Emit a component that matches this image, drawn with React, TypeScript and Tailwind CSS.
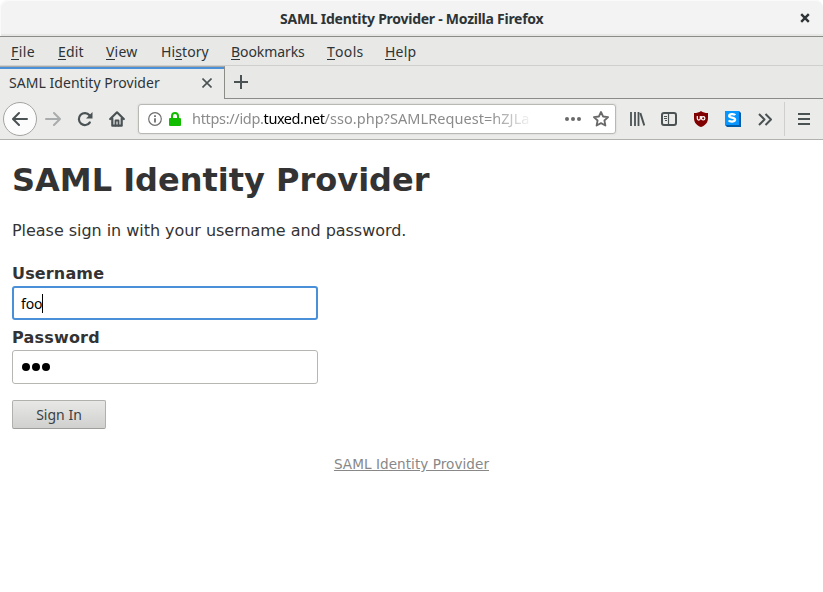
import React from 'react';

const ui = 'font-["Noto_Sans","Open_Sans",sans-serif]';

function MenuItem({ pre = '', letter, rest, box }: { pre?: string; letter: string; rest: string; box: string }) {
  return (
    <span className={`whitespace-nowrap ${box}`}>
      {pre}
      <span className="inline-block border-b border-[#2e3436] leading-[14px]">{letter}</span>
      {rest}
    </span>
  );
}

function TitleBar() {
  return (
    <header className="flex h-[37px] shrink-0 items-center rounded-t-lg border-b border-[#8b8c88] bg-[#f3f3f3] shadow-[inset_1px_1px_0_#fafafa,inset_0_-2px_1px_#e6e6e5]">
      <span className="w-[280px]" />
      <h1 className="w-[484px] whitespace-nowrap pt-px text-[14px] font-bold leading-5 tracking-[-0.26px] text-[#2e3436]">SAML Identity Provider - Mozilla Firefox</h1>
      <svg className="ml-[36px] h-[10px] w-[10px]" viewBox="0 0 10 10" stroke="#2e3436" strokeWidth="2.4">
        <path d="M1.200 1.200l7.600 7.600M8.800 1.200L1.200 8.800" />
      </svg>
    </header>
  );
}

function MenuBar() {
  return (
    <nav className="flex h-[29px] shrink-0 items-center border-b border-[#cfcfcd] bg-[#e8e8e7] pl-[11px] text-[14px] text-[#2e3436]">
      <MenuItem letter="F" rest="ile" box="w-[47px] tracking-[0.4px]" />
      <MenuItem letter="E" rest="dit" box="w-[48px] tracking-[0.2px]" />
      <MenuItem letter="V" rest="iew" box="w-[55px] tracking-[0.2px]" />
      <MenuItem pre="Hi" letter="s" rest="tory" box="w-[70px] tracking-[0.1px]" />
      <MenuItem letter="B" rest="ookmarks" box="w-[96px] tracking-[-0.08px]" />
      <MenuItem letter="T" rest="ools" box="w-[58px] tracking-[0.3px]" />
      <MenuItem letter="H" rest="elp" box="w-[50px] tracking-[0.2px]" />
    </nav>
  );
}

function TabStrip() {
  return (
    <div className="flex h-[33px] shrink-0">
      <div className="flex w-[225px] items-center border-r border-t border-r-[#8b8c88] border-t-[#a9a9a7] bg-[#ebebea] shadow-[inset_0_2px_0_#4a90d9]">
        <span className="w-[193px] whitespace-nowrap pb-[2px] pl-[9px] text-[14px] tracking-[0.04px] text-[#2e3436]">SAML Identity Provider</span>
        <svg className="ml-[9px] h-[10px] w-[10px]" viewBox="0 0 10 10" stroke="#4b5254" strokeWidth="1.6">
          <path d="M.5.5l9 9M9.500.5l-9 9" />
        </svg>
      </div>
      <div className="flex flex-1 items-center border-b border-[#8b8c88] bg-[#e8e8e7] pl-[9px]">
        <svg className="h-[14px] w-[14px]" viewBox="0 0 14 14" stroke="#4b5254" strokeWidth="2">
          <path d="M7 0v14M0 7h14" />
        </svg>
      </div>
    </div>
  );
}

function AddressBar() {
  return (
    <div className="flex h-[30px] w-[478px] shrink-0 items-center rounded-[3px] border border-[#b8b8b5] bg-white shadow-[0_0_1px_1px_#e2e2e0]">
      <svg className="ml-[9px] h-[14px] w-[14px] shrink-0" viewBox="0 0 14 14" fill="none" stroke="#6f6f6f" strokeWidth="1.2">
        <circle cx="7" cy="7" r="6.3" />
        <path d="M7 6.200v4.300M7 3.300v1.800" strokeWidth="1.8" />
      </svg>
      <svg className="ml-[7px] h-[14px] w-[12px] shrink-0" viewBox="0 0 12 14" fill="none">
        <rect y="6" width="12" height="8" rx="1" fill="#12bc00" />
        <path d="M3 7V4a3 3 0 016 0v3" stroke="#12bc00" strokeWidth="2" />
      </svg>
      <span className="ml-[11px] w-[352px] shrink-0 whitespace-nowrap text-[14.500px] text-[#8b8b8b] [mask-image:linear-gradient(to_right,black_298px,transparent_342px)]">
        <span className="tracking-[-0.32px]">https://idp.</span>
        <span className="tracking-[-0.45px] text-black">tuxed.net</span>
        <span className="tracking-[0.05px]">/sso.php?SAMLRequest=hZJLa</span>
      </span>
      <svg className="ml-[21px] h-[4px] w-[16px] shrink-0" viewBox="0 0 16 4" fill="#696969">
        <circle cx="2" cy="2" r="2" /><circle cx="8" cy="2" r="2" /><circle cx="14" cy="2" r="2" />
      </svg>
      <svg className="ml-[12px] h-[16px] w-[16px] shrink-0" viewBox="0 0 16 16" fill="none" stroke="#696969" strokeWidth="1.8" strokeLinejoin="round">
        <path d="M8 1l2.100 4.500 5 .6-3.700 3.400 1 5L8 12.100l-4.400 2.400 1-5L.9 6.100l5-.6z" />
      </svg>
    </div>
  );
}

function Toolbar() {
  return (
    <div className="flex h-[41px] shrink-0 items-center border-b border-[#b1b1ae] bg-[#ebebea] text-[#4b5254]">
      <button className="ml-[3px] flex h-[34px] w-[34px] items-center justify-center rounded-full border border-[#a4a4a2] bg-[#fcfcfc]">
        <svg className="h-[16px] w-[16px]" viewBox="0 0 16 16" fill="none" stroke="currentColor" strokeWidth="2" strokeLinecap="round" strokeLinejoin="round">
          <path d="M15 8H1.500M7 2L1 8l6 6" />
        </svg>
      </button>
      <svg className="ml-[8px] h-[16px] w-[16px] text-[#a9acac]" viewBox="0 0 16 16" fill="none" stroke="currentColor" strokeWidth="2" strokeLinecap="round" strokeLinejoin="round">
        <path d="M1 8h13.500M9 2l6 6-6 6" />
      </svg>
      <svg className="ml-[16px] h-[16px] w-[16px]" viewBox="0 0 16 16" fill="none" stroke="currentColor" strokeWidth="2.200">
        <path d="M12.800 11.500A6 6 0 1112.500 4.200" strokeLinecap="round" />
        <path d="M15.500 1v6.500H9z" fill="currentColor" stroke="none" />
      </svg>
      <svg className="ml-[16px] h-[16px] w-[16px]" viewBox="0 0 16 16" fill="none" stroke="currentColor" strokeWidth="2.200" strokeLinecap="round" strokeLinejoin="round">
        <path d="M1.200 8L8 1.300 14.800 8M3.300 7.500v7.200h9.400V7.500" />
        <path d="M6.500 14.500V9.500h3v5" strokeWidth="1.800" />
      </svg>
      <span className="w-[13px]" />
      <AddressBar />
      <svg className="ml-[14px] h-[14px] w-[15px]" viewBox="0 0 15 14" fill="none" stroke="currentColor" strokeWidth="2">
        <path d="M1 0v14M5 0v14M8.500 0v14" strokeWidth="1.800" /><path d="M10.300 1L14.300 13.500" />
      </svg>
      <svg className="ml-[16px] h-[14px] w-[16px]" viewBox="0 0 16 14" fill="none" stroke="currentColor" strokeWidth="2">
        <rect x="1" y="1" width="14" height="12" rx="2" />
        <path d="M7.500 1v12" strokeWidth="1.200" /><path d="M3 4.500h3M3 6.500h3M4 8.500h2" strokeWidth="1" />
      </svg>
      <svg className="ml-[17px] h-[16px] w-[14px]" viewBox="0 0 14 16">
        <path d="M7 0c2 1.500 4 2 7 2v5c0 5-3 7.500-7 9-4-1.500-7-4-7-9V2c3 0 5-.5 7-2z" fill="#800000" />
        <path d="M3.300 5v2.600a1.500 1.500 0 003 0V5" fill="none" stroke="#fff" strokeWidth="1.200" />
        <circle cx="9.200" cy="7.300" r="1.700" fill="none" stroke="#fff" strokeWidth="1.200" />
        <path d="M7.300 5v2.500" stroke="#fff" strokeWidth="1" />
      </svg>
      <svg className="ml-[17px] h-[16px] w-[16px]" viewBox="0 0 16 16">
        <path d="M0 0h14l2 2v14H2l-2-2z" fill="#005ba9" />
        <path d="M0 0h14v14H0z" fill="#0795ff" />
        <path d="M10.200 4.100C9.400 2.800 4.200 2.600 4.200 5c0 2.300 5.900 1.100 5.900 3.600 0 2.600-5.300 2.400-6.400.7" fill="none" stroke="#fff" strokeWidth="2.300" />
      </svg>
      <svg className="ml-[17px] h-[13px] w-[14px]" viewBox="0 0 14 13" fill="none" stroke="currentColor" strokeWidth="2" strokeLinejoin="round">
        <path d="M1 1l5.500 5.500L1 12M7.500 1L13 6.500 7.500 12" />
      </svg>
      <span className="ml-[12px] h-[34px] w-px bg-[#cfcfcd]" />
      <svg className="ml-[13px] h-[12px] w-[12px]" viewBox="0 0 12 12" stroke="currentColor" strokeWidth="2">
        <path d="M0 1h12M0 6h12M0 11h12" />
      </svg>
    </div>
  );
}

function LoginPage() {
  return (
    <main className='flex flex-1 flex-col bg-white px-3 font-["DejaVu_Sans",sans-serif] text-[16px] text-[#333]'>
      <h2 className="mt-[20px] h-[40px] text-[32px] font-bold leading-[40px]">SAML Identity Provider</h2>
      <p className="mt-[21px] h-5 leading-5 tracking-[-0.04px]">Please sign in with your username and password.</p>
      <form className="flex flex-col items-start">
        <label className="mt-[23px] h-5 font-bold leading-5 tracking-[0.15px]">Username</label>
        <div className={`mt-[2px] flex h-[34px] w-[306px] items-center rounded-[3px] border-2 border-[#4a90d9] bg-white pl-[7px] text-[14px] text-black ${ui}`}>
          <span className="w-[21px] tracking-[-0.1px]">foo</span>
          <span className="h-[19px] w-px bg-black" />
        </div>
        <label className="mt-[8px] h-5 font-bold leading-5 tracking-[0.2px]">Password</label>
        <div className="mt-[2px] flex h-[34px] w-[306px] items-center gap-[2px] rounded-[3px] border border-[#b6b6b3] bg-white pl-[9px]">
          <span className="h-[8px] w-[8px] rounded-full bg-black" />
          <span className="h-[8px] w-[8px] rounded-full bg-black" />
          <span className="h-[8px] w-[8px] rounded-full bg-black" />
        </div>
        <button type="button" className={`mt-4 h-[29px] w-[94px] rounded-[2px] border border-[#b0b0ad] border-b-[#9e9e9b] bg-linear-to-b from-[#e8e8e7] to-[#d0d0ce] text-[14px] leading-5 text-[#3b4143] ${ui}`}>Sign In</button>
      </form>
      <footer className="mt-[25px] text-center text-[13.6px] leading-5 tracking-[0.04px] text-[#888]"><a className="underline">SAML Identity Provider</a></footer>
    </main>
  );
}

export default function App() {
  return (
    <div className='flex h-[592px] w-[823px] flex-col overflow-hidden bg-white font-["Noto_Sans","Open_Sans",sans-serif]'>
      <TitleBar />
      <MenuBar />
      <TabStrip />
      <Toolbar />
      <LoginPage />
    </div>
  );
}
